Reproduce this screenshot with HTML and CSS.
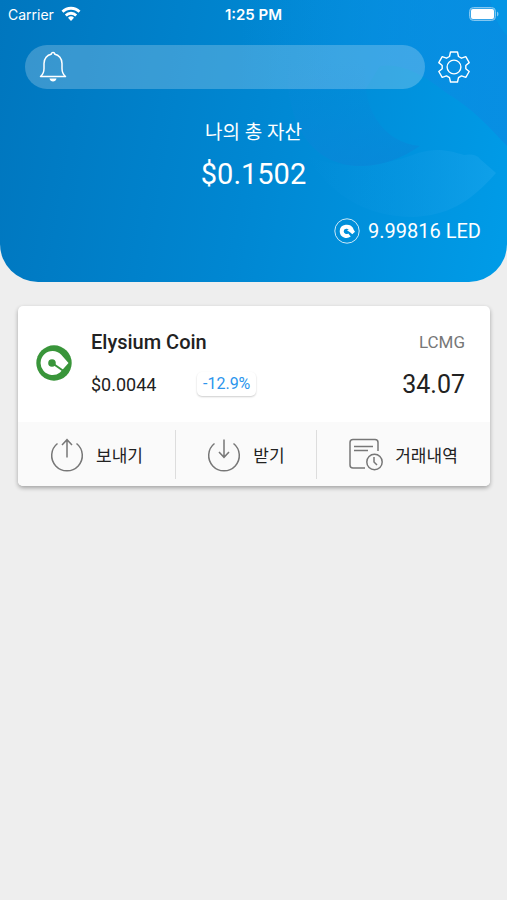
FILE: index.html
```html
<!DOCTYPE html>
<html lang="ko">
<head>
<meta charset="utf-8">
<meta name="viewport" content="width=device-width, initial-scale=1">
<title>Elysium Wallet</title>
<link rel="stylesheet" href="styles.css">
</head>
<body>
<header class="hero">
  <svg class="hero-art" viewBox="0 0 267 282" preserveAspectRatio="xMaxYMin slice" aria-hidden="true">
    <defs>
      <linearGradient id="sky" x1="0" y1="0" x2="1" y2="0">
        <stop offset="0" stop-color="#0a8ce2" stop-opacity="0"/>
        <stop offset=".6" stop-color="#0a8ce2" stop-opacity=".6"/>
        <stop offset="1" stop-color="#0a8ce2" stop-opacity=".8"/>
      </linearGradient>
      <linearGradient id="swoosh" x1="0" y1="0" x2="1" y2="0">
        <stop offset="0" stop-color="#0f94e0" stop-opacity="0"/>
        <stop offset=".5" stop-color="#0f98e2" stop-opacity=".35"/>
        <stop offset="1" stop-color="#14a2ea" stop-opacity=".75"/>
      </linearGradient>
      <linearGradient id="disc" x1="0" y1="0" x2="0" y2="1">
        <stop offset="0" stop-color="#0a86d8" stop-opacity="0"/>
        <stop offset="1" stop-color="#0a86d8" stop-opacity=".7"/>
      </linearGradient>
    </defs>
    <path d="M0 0h267v146C250 128 232 108 208 94C190 80 165 62 140 66L125 90H0z" fill="url(#sky)"/>
    <path d="M250 0h17v36q-12-12-17-36z" fill="#009ce8" opacity=".5"/>
    <path d="M66 155c36 16 76 12 112-2 20-6 32-2 46 2q12-2 16 4L256 173c-28 32-50 42-82 44-48 0-84-22-108-62z" fill="url(#swoosh)"/>
    <path d="M48 60c-4 66 26 106 72 106 24 0 42-8 60-20-38-4-60-38-54-86z" fill="url(#disc)"/>
  </svg>
  <div class="status">
    <span class="carrier">Carrier
      <svg width="20" height="16" viewBox="0 0 20 16" aria-hidden="true"><g fill="none" stroke="#fff" stroke-width="2.8"><path d="M1.500 5.800a12 12 0 0 1 17 0M4.800 9.400a7.400 7.400 0 0 1 10.400 0"/></g><path d="M10 15l-3-3.200a4.300 4.300 0 0 1 6 0z" fill="#fff"/></svg>
    </span>
    <time class="clock">1:25 PM</time>
    <svg class="battery" width="30" height="14" viewBox="0 0 30 14" aria-hidden="true"><rect x=".5" y=".5" width="26" height="13" rx="4" fill="#fff" fill-opacity=".4" stroke="#fff" opacity=".5"/><rect x="2" y="2" width="23" height="10" rx="2" fill="#fff"/><path d="M28 4.500c2 1 2 4 0 5z" fill="#fff" opacity=".5"/></svg>
  </div>
  <div class="toolbar">
    <button class="notice" type="button" aria-label="알림">
      <svg width="28" height="32" viewBox="0 0 28 32" aria-hidden="true"><path d="M1.500 25.500c3-2.500 3.500-4 3.500-8v-5c0-5 3.200-8.500 7.200-9.200 0-2.400 3.600-2.400 3.600 0 4 .7 7.200 4.200 7.200 9.200v5c0 4 .5 5.500 3.500 8z" fill="none" stroke="#fff" stroke-width="1.500" stroke-linejoin="round"/><path d="M10.500 27.500h7c-.5 4-6.500 4-7 0z" fill="#fff"/></svg>
    </button>
    <button class="settings" type="button" aria-label="설정">
      <svg width="32" height="32" viewBox="0 0 32 32" fill="none" stroke="#fff" stroke-width="1.400" stroke-linejoin="round" aria-hidden="true"><circle cx="16" cy="16" r="6.900"/><path d="M12.500 1h7l1 4.500 3 1.700 4.300-1.500 3.400 5.900-3.400 2.900v3.200l3.400 2.800-3.400 5.900-4.300-1.500-3 1.800-1 4.300h-7l-1-4.300-3-1.800-4.300 1.500-3.400-5.900 3.400-2.800v-3.200L.8 11.600l3.400-5.900 4.300 1.500 3-1.700z"/></svg>
    </button>
  </div>
  <section class="assets">
    <h1>나의 총 자산</h1>
    <p class="total">$0.1502</p>
    <p class="led">
      <svg width="26" height="26" viewBox="0 0 26 26" aria-hidden="true"><circle cx="13" cy="13" r="12.200" fill="none" stroke="#fff" opacity=".8"/><path d="M17.800 12C15.500 7 7.700 8 7.700 13.300c0 4.700 5.300 5.700 7.800 3.700" fill="none" stroke="#fff" stroke-width="4"/><path d="M13 12.300l5-3 3 4.500-2.700 2.400-2.300-2z" fill="#fff"/></svg>
      9.99816 LED
    </p>
  </section>
</header>
<main>
  <article class="card">
    <div class="coin">
      <svg width="36" height="36" viewBox="0 0 36 36" aria-hidden="true"><circle cx="18" cy="18" r="17.700" fill="#39953a"/><path d="M32.500 18L25 9.500A12 12 0 1 0 24 27.500L28.500 22.500z" fill="#fff"/><circle cx="16" cy="18" r="3.800" fill="#39953a"/><path d="M16 18l13 9" stroke="#39953a" stroke-width="2"/></svg>
      <div class="details">
        <div class="row"><h2>Elysium Coin</h2><span class="symbol">LCMG</span></div>
        <div class="row"><span class="price">$0.0044</span><span class="change">-12.9%</span><span class="amount">34.07</span></div>
      </div>
    </div>
    <nav class="actions">
      <button type="button"><svg width="34" height="34" viewBox="0 0 34 34" aria-hidden="true"><path d="M7.500 5.500a15.300 15.300 0 1 0 19 0M17 19.500V2M12 7l5-5.300L22 7"/></svg>보내기</button>
      <button type="button"><svg width="34" height="34" viewBox="0 0 34 34" aria-hidden="true"><path d="M7.500 5.500a15.300 15.300 0 1 0 19 0M17 1.500V19M12 14l5 5.300 5-5.300"/></svg>받기</button>
      <button type="button"><svg width="34" height="34" viewBox="0 0 34 34" aria-hidden="true"><path d="M16 30H4q-3 0-3-3V4.500q0-3 3-3h22q3 0 3 3V13M5 8.500h19M5 12.500h14"/><circle cx="25.500" cy="24" r="7.700"/><path d="M25 19v5l3 3"/></svg>거래내역</button>
    </nav>
  </article>
</main>
</body>
</html>
```
FILE: styles.css
```css
* { box-sizing: border-box; }
body {
  margin: 0;
  min-height: 100vh;
  background: #eee;
  color: #222;
  font-family: Roboto, "Noto Sans CJK KR", sans-serif;
}
h1, h2, p { margin: 0; font-weight: 400; }
button { border: 0; padding: 0; background: none; font: inherit; color: inherit; cursor: pointer; }
svg { flex: none; display: block; }

.hero {
  position: relative;
  overflow: hidden;
  padding-bottom: 38px;
  border-radius: 0 0 38px 38px;
  background: linear-gradient(100deg, #0076be 0%, #0087d2 50%, #009ce8 100%);
  color: #fff;
}
.hero-art { position: absolute; top: 0; right: 0; height: 100%; }
.status, .toolbar, .assets { position: relative; }
.status {
  display: grid;
  grid-template-columns: 1fr auto 1fr;
  align-items: center;
  height: 28px;
  padding: 0 8px;
  font-family: Inter, sans-serif;
  font-size: 14px;
}
.carrier { display: flex; align-items: center; gap: 7px; }
.clock { font-size: 15px; font-weight: 600; }
.battery { justify-self: end; }
.toolbar {
  display: flex;
  align-items: center;
  gap: 13px;
  padding: 17px 37px 0 25px;
}
.notice {
  flex: 1;
  display: flex;
  align-items: center;
  height: 44px;
  padding-left: 14px;
  border-radius: 22px;
  background: rgba(255, 255, 255, .22);
}
.assets { padding: 30px 26px 0; text-align: center; }
.assets h1 { font-size: 19px; line-height: 28px; }
.total { margin-top: 7px; font-size: 29px; line-height: 40px; }
.led {
  display: flex;
  justify-content: flex-end;
  align-items: center;
  gap: 8px;
  margin-top: 24px;
  font-size: 20px;
  line-height: 26px;
}

main { padding: 24px 17px 24px 18px; }
.card {
  overflow: hidden;
  border-radius: 5px;
  background: #fff;
  box-shadow: 0 2px 4px rgba(0, 0, 0, .32);
}
.coin {
  display: flex;
  align-items: center;
  gap: 19px;
  padding: 20px 25px 22px 18px;
}
.details { flex: 1; display: grid; gap: 10px; }
.row { display: flex; align-items: center; height: 32px; }
.row h2 { font-size: 20px; font-weight: 500; }
.symbol { margin-left: auto; color: #777; font-size: 17px; }
.price { width: 106px; font-size: 18px; }
.change {
  padding: 0 6px;
  border-radius: 5px;
  box-shadow: 0 1px 2px rgba(0, 0, 0, .2);
  color: #2c95ed;
  font-size: 16px;
  line-height: 24px;
}
.amount { margin-left: auto; font-size: 25px; }
.actions {
  display: grid;
  grid-template-columns: 157fr 141fr 174fr;
  padding: 8px 0 7px;
  background: #fafafa;
}
.actions button {
  display: flex;
  align-items: center;
  justify-content: center;
  gap: 12px;
  height: 49px;
  font-size: 17px;
}
.actions button + button { border-left: 1px solid #ddd; }
.actions svg { fill: none; stroke: #777; stroke-width: 1.5; }
```
